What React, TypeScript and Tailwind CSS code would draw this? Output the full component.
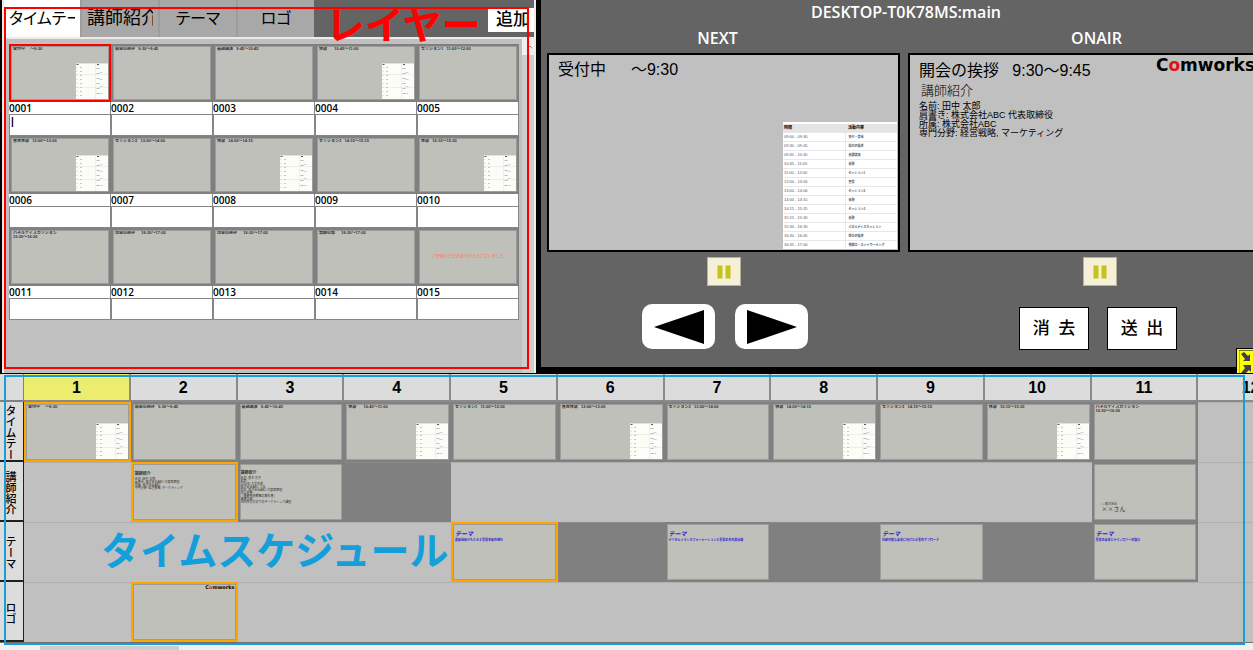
import { useState } from "react";
import type { ReactNode } from "react";
import { ChevronUp } from "lucide-react";

interface Slide {
  id: string;
  title: string;
  second?: string;
  schedule?: boolean;
  closing?: string;
}

const slides: Slide[] = [
  { id: "0001", title: "受付中　 ～9:30", schedule: true },
  { id: "0002", title: "開会の挨拶   9:30～9:45" },
  { id: "0003", title: "基調講演   9:45～10:45" },
  { id: "0004", title: "休憩　   10:45～11:00", schedule: true },
  { id: "0005", title: "セッション1   11:00～12:00" },
  { id: "0006", title: "昼食休憩   12:00～13:00", schedule: true },
  { id: "0007", title: "セッション2   13:00～14:00" },
  { id: "0008", title: "休憩   14:00～14:15", schedule: true },
  { id: "0009", title: "セッション3   14:15～15:15" },
  { id: "0010", title: "休憩   15:15～15:30", schedule: true },
  { id: "0011", title: "パネルディスカッション", second: "15:30～16:30" },
  { id: "0012", title: "閉会の挨拶　  16:30～17:00" },
  { id: "0013", title: "閉会の挨拶　  16:30～17:00" },
  { id: "0014", title: "懇親の部　  16:30～17:00" },
  { id: "0015", title: "", closing: "ご参加いただきありがとうございました" },
];

const agenda = [
  ["09:00 - 09:30", "受付・登録"],
  ["09:30 - 09:45", "開会の挨拶"],
  ["09:45 - 10:45", "基調講演"],
  ["10:45 - 11:00", "休憩"],
  ["11:00 - 12:00", "セッション1"],
  ["12:00 - 13:00", "昼食"],
  ["13:00 - 14:00", "セッション2"],
  ["14:00 - 14:15", "休憩"],
  ["14:15 - 15:15", "セッション3"],
  ["15:15 - 15:30", "休憩"],
  ["15:30 - 16:30", "パネルディスカッション"],
  ["16:30 - 16:45", "閉会の挨拶"],
  ["16:45 - 17:00", "懇親会・ネットワーキング"],
];

const tabs = [
  { name: "タイムテー", size: "text-[16px]" },
  { name: "講師紹介", size: "text-[18px]" },
  { name: "テーマ", size: "text-[16px]" },
  { name: "ロゴ", size: "text-[16px]" },
];

const columns = [1, 2, 3, 4, 5, 6, 7, 8, 9, 10, 11, 12];

const themes: { [key: number]: string } = {
  5: "最新技術がもたらす業界革新の現在",
  7: "デジタルトランスフォーメーションと業界変革の最前線",
  9: "持続可能な未来に向けた企業のアプローチ",
  11: "業界の未来とテクノロジーの融合",
};

// Tiny picture of the agenda sheet used in the corner of a thumbnail
function ScheduleImage() {
  return (
    <svg className="ml-auto mt-auto w-8 h-9 shrink-0" viewBox="0 0 32 36" aria-hidden="true">
      <rect width="32" height="36" fill="#fdfdf8" />
      <path d="M0 0.5H32" stroke="#e2e2dc" />
      <path d="M19.5 0V36M0 11.5H32M0 24.5H32" stroke="#efeee8" />
      <path d="M0.5 1.5h2M21 1.5h2" stroke="#55555a" />
      <path d="M1 4v30" stroke="#e3cbb2" strokeDasharray="1 3" />
      <path d="M5 4v30" stroke="#b4cbe2" strokeWidth="2" strokeDasharray="1 3" />
      <path d="M22 5v29" stroke="#b9b9c6" strokeWidth="3" strokeDasharray="1 4" />
      <path d="M25 9v24" stroke="#c2d4e6" strokeWidth="3" strokeDasharray="1 6" />
    </svg>
  );
}

function Thumb({ frame, children }: { frame: string; children?: ReactNode }) {
  return (
    <div className={`border-2 overflow-hidden ${frame}`}>
      <div className="h-full border border-[#9c9c9a] bg-[#c0c0ba] overflow-hidden flex flex-col whitespace-pre text-[4px] leading-[4px] font-bold text-[#30302e]">
        {children}
      </div>
    </div>
  );
}

function SlideFace({ slide }: { slide: Slide }) {
  return (
    <>
      {slide.title && <p className="px-px">{slide.title}</p>}
      {slide.second && <p className="px-px">{slide.second}</p>}
      {slide.schedule && <ScheduleImage />}
      {slide.closing && (
        <p className="m-auto text-[#ff8078]">{slide.closing}</p>
      )}
    </>
  );
}

function PauseButton({ label }: { label: string }) {
  return (
    <button
      aria-label={label}
      className="mt-[5px] w-[34px] h-[29px] bg-[#f5f0d6] border border-[#b5b39c] flex items-center justify-center"
    >
      <svg width="14" height="14" viewBox="0 0 14 14">
        <rect x="0.5" y="0.5" width="5" height="13" fill="#c4c41a" />
        <rect x="8.5" y="0.5" width="5" height="13" fill="#c4c41a" />
      </svg>
    </button>
  );
}

function Brand({ className }: { className: string }) {
  return (
    <span className={`font-['DejaVu_Sans',sans-serif] font-bold text-black ${className}`}>
      C<span className="text-[#dc1414]">o</span>mworks
    </span>
  );
}

function LayerPanel() {
  const [selected, setSelected] = useState(0);

  return (
    <section className="relative w-[536px] shrink-0 bg-[#c0c0c0] border-l-2 border-black flex flex-col">
      <div className="flex flex-col flex-1 border-x-2 border-[#ebebeb]">
        <div className="flex items-start bg-[#646464] border-b-2 border-[#ebebeb]">
          <div role="tablist" className="flex gap-[2px] bg-[#9c9c9c]">
            {tabs.map((tab, i) => (
              <button
                key={tab.name}
                role="tab"
                aria-selected={i === selected}
                onClick={() => setSelected(i)}
                className={`w-[76px] h-[37px] px-[5px] ${i === selected ? "bg-white" : "bg-[#a8a8a8]"}`}
              >
                <span
                  className={`block overflow-hidden whitespace-nowrap [font-feature-settings:'palt'] ${tab.size}`}
                >
                  {tab.name}
                </span>
              </button>
            ))}
          </div>
          <button className="ml-auto mt-2 w-[46px] h-6 pl-1 bg-white text-[17px] leading-6 font-medium">
            追加
          </button>
        </div>

        <div className="flex flex-1">
          <div className="flex-1 pt-[5px] pl-[5px] pr-[3px] pb-[53px]">
            <div className="grid grid-cols-5 bg-[#858585]">
              {slides.map((slide, i) => (
                <div key={slide.id} className="flex flex-col">
                  <Thumb
                    frame={i === 0 ? "h-[58px] border-[#ff0000]" : "h-[58px] border-[#808080]"}
                  >
                    <SlideFace slide={slide} />
                  </Thumb>
                  <label
                    htmlFor={`memo-${slide.id}`}
                    className="h-3 mr-px bg-white text-[10px] leading-3 font-semibold font-['Open_Sans',sans-serif] text-black"
                  >
                    {slide.id}
                  </label>
                  <input
                    id={`memo-${slide.id}`}
                    defaultValue={i === 0 ? "|" : ""}
                    className="h-5 my-px mx-px min-w-0 px-px pb-2 bg-white text-[10px] font-bold text-black outline-none"
                  />
                </div>
              ))}
            </div>
          </div>
          <div className="w-3 bg-[#cdcdcd]">
            <div className="h-4 bg-[#f0f0f0] flex items-center justify-end">
              <ChevronUp className="w-2 h-2 text-[#606060]" />
            </div>
          </div>
        </div>
      </div>

      <div className="absolute left-[2px] right-[7px] top-[7px] bottom-[4px] border-2 border-[#ff0000] pointer-events-none" />
      <p className="absolute left-[324px] top-[6px] text-[39px] leading-10 font-bold text-[#ff0000] pointer-events-none">
        レイヤー
      </p>
    </section>
  );
}

function NextMonitor() {
  return (
    <div className="w-full h-[199px] border-2 border-black bg-[#c0c0c0] flex flex-col">
      <p className="pl-[9px] pt-[5px] text-[16px] leading-5 whitespace-pre text-black">
        {"受付中　  ～9:30"}
      </p>
      <table className="ml-auto mt-auto mr-px mb-px w-[114px] bg-white text-[4px] leading-[8px] whitespace-nowrap text-[#46586c]">
        <thead>
          <tr className="bg-[#e4e4e4] border-t-2 border-white text-left text-black">
            <th className="p-0 pl-px w-[62px] h-[9px]">時間</th>
            <th className="p-0 pl-[3px]">活動内容</th>
          </tr>
        </thead>
        <tbody>
          {agenda.map(([time, item]) => (
            <tr key={time} className="border-t border-[#e8e8e8]">
              <td className="p-0 pl-px h-[9px] border-r border-[#e8e8e8]">{time}</td>
              <td className="p-0 pl-[3px] text-[3px] font-bold">{item}</td>
            </tr>
          ))}
        </tbody>
      </table>
    </div>
  );
}

function OnairMonitor() {
  return (
    <div className="w-full h-[199px] border-2 border-black bg-[#c0c0c0] pl-[9px] text-black">
      <div className="flex justify-between pr-7">
        <p className="pt-1 text-[16px] leading-6 whitespace-pre">
          {"開会の挨拶   9:30～9:45"}
        </p>
        <Brand className="text-[17px] leading-5" />
      </div>
      <p className="pl-[2px] text-[13px] leading-4 font-light">講師紹介</p>
      <div className="pt-[3px] text-[9px] leading-[9px]">
        <p>名前: 田中 太郎</p>
        <p>肩書き: 株式会社ABC 代表取締役</p>
        <p>所属: 株式会社ABC</p>
        <p>専門分野: 経営戦略, マーケティング</p>
      </div>
    </div>
  );
}

function OutputPanel() {
  return (
    <section className="relative flex-1 min-w-0 overflow-hidden bg-[#646464] border-l-[5px] border-b-[6px] border-black">
      <div className="w-max pl-1.5 text-white">
        <h1 className="h-6 pr-5 text-center text-[16px] leading-6 font-semibold font-['Open_Sans',sans-serif]">
          DESKTOP-T0K78MS:main
        </h1>
        <div className="flex gap-2">
          <div className="w-[353px] flex flex-col items-center">
            <h2 className="h-[29px] pr-3 text-[16px] leading-7 font-semibold font-['Open_Sans',sans-serif]">
              NEXT
            </h2>
            <NextMonitor />
            <PauseButton label="NEXT 一時停止" />
            <div className="mt-[18px] pl-[3px] flex gap-5">
              <button aria-label="前へ" className="w-[73px] h-[45px] rounded-[10px] bg-white flex items-center justify-center">
                <svg width="50" height="34" viewBox="0 0 50 34">
                  <polygon points="0,17 50,0 50,34" fill="#000" />
                </svg>
              </button>
              <button aria-label="次へ" className="w-[73px] h-[45px] rounded-[10px] bg-white flex items-center justify-center">
                <svg width="50" height="34" viewBox="0 0 50 34">
                  <polygon points="50,17 0,0 0,34" fill="#000" />
                </svg>
              </button>
            </div>
          </div>
          <div className="w-[377px] flex flex-col items-center">
            <h2 className="h-[29px] text-[16px] leading-7 font-semibold font-['Open_Sans',sans-serif]">
              ONAIR
            </h2>
            <OnairMonitor />
            <div className="pl-1.5">
              <PauseButton label="ONAIR 一時停止" />
            </div>
            <div className="mt-[21px] pl-[3px] flex gap-[18px] text-[17px] font-medium text-black">
              <button className="w-[70px] h-[43px] bg-white border border-black">消&ensp;去</button>
              <button className="w-[70px] h-[43px] bg-white border border-black">送&ensp;出</button>
            </div>
          </div>
        </div>
      </div>
    </section>
  );
}

function TimelineCell({ row, col }: { row: number; col: number }) {
  const plain = "h-[60px] border-[#808080]";
  const active = "h-[60px] border-[#ffa500]";

  if (row === 0 && col <= 11) {
    return (
      <Thumb frame={col === 1 ? active : plain}>
        <SlideFace slide={slides[col - 1]} />
      </Thumb>
    );
  }
  if (row === 1 && col === 2) {
    return (
      <Thumb frame={active}>
        <p className="px-px pt-[7px]">講師紹介</p>
        <div className="px-px pt-[2px] text-[3px] leading-[3px] font-normal">
          <p>名前: 田中 太郎</p>
          <p>肩書き: 株式会社ABC 代表取締役</p>
          <p>所属: 株式会社ABC</p>
          <p>専門分野: 経営戦略, マーケティング</p>
        </div>
      </Thumb>
    );
  }
  if (row === 1 && col === 3) {
    return (
      <Thumb frame={plain}>
        <p className="pt-[6px]">講師紹介</p>
        <div className="pt-[2px] text-[3px] leading-[3px] font-normal">
          <p>名前: 鈴木 花子</p>
          <p>経歴:</p>
          <p>2010年 大学卒業</p>
          <p>株式会社ABC 入社</p>
          <p>現在: 株式会社ABC 代表取締役</p>
          <p>主な著書:</p>
          <p>「最新技術戦略の教科書」</p>
          <p>講演実績:</p>
          <p>国内外の大学でのマーケティング講座</p>
        </div>
      </Thumb>
    );
  }
  if (row === 1 && col === 11) {
    return (
      <Thumb frame={plain}>
        <div className="mt-auto pl-[7px] pb-[7px] font-normal">
          <p className="text-[3px]">○○株式会社</p>
          <p className="text-[6px] leading-[6px] font-['Noto_Sans_CJK_JP',sans-serif]">××さん</p>
        </div>
      </Thumb>
    );
  }
  if (row === 2 && themes[col]) {
    return (
      <Thumb frame={col === 5 ? active : plain}>
        <div className="px-px pt-[6px] text-[#2a20d0]">
          <p className="text-[6px] leading-[7px] italic">テーマ</p>
          <p className="text-[3px]">{themes[col]}</p>
        </div>
      </Thumb>
    );
  }
  if (row === 3 && col === 2) {
    return (
      <Thumb frame={active}>
        <Brand className="ml-auto text-[5px] leading-[4px]" />
      </Thumb>
    );
  }

  const dark = (row === 1 && col === 4) || (row === 2 && [6, 8, 10].includes(col));
  return (
    <div
      className={`h-[60px] border-t ${dark ? "bg-[#808080] border-[#8a8a8a]" : "border-[#b0b0b0]"}`}
    />
  );
}

function Timeline() {
  return (
    <section className="relative flex-1 flex flex-col bg-[#c0c0c0] overflow-hidden">
      <table className="table-fixed w-[1305px] border-separate border-spacing-0">
        <thead>
          <tr>
            <td className="w-6 h-7 p-0 bg-[#dcdcdc] border-r border-b-2 border-[#808080]" />
            {columns.map((n) => (
              <th
                key={n}
                scope="col"
                className={`h-7 p-0 pt-[2px] border-r-2 border-b-2 border-[#8a8a8a] text-[16px] leading-6 font-bold font-['Liberation_Sans',sans-serif] text-black ${
                  n === 1 ? "bg-[#ecec6e]" : "bg-[#dcdcdc]"
                }`}
              >
                {n}
              </th>
            ))}
          </tr>
        </thead>
        <tbody>
          {tabs.map((tab, row) => (
            <tr key={tab.name}>
              <th scope="row" className="p-0 bg-[#dcdcdc] border-r border-b-2 border-[#202020]">
                <div className="h-[58px] pl-1 pt-[3px] overflow-hidden flex items-center">
                  <span className="[writing-mode:vertical-rl] text-[11px] leading-3 font-medium whitespace-nowrap text-black">
                    {tab.name}
                  </span>
                </div>
              </th>
              {columns.map((col) => (
                <td key={col} className="p-0">
                  <TimelineCell row={row} col={col} />
                </td>
              ))}
            </tr>
          ))}
        </tbody>
      </table>
      <div className="flex-1 min-h-2 border-t border-[#707070] bg-[#f0f0f0] pl-10 pt-[3px] flex">
        <div className="w-[139px] bg-[#cdcdcd]" />
      </div>

      <div className="absolute left-1 right-2 top-px bottom-[5px] border-2 border-[#149fda] pointer-events-none" />
      <p className="absolute left-[101px] top-[158px] text-[39px] leading-10 font-bold text-[#149fda] pointer-events-none">
        タイムスケジュール
      </p>
    </section>
  );
}

export default function App() {
  return (
    <div
      lang="ja"
      className="min-h-screen overflow-hidden bg-black flex flex-col font-['Liberation_Sans','Noto_Sans_CJK_JP',sans-serif]"
    >
      <div className="relative flex border-b border-black">
        <LayerPanel />
        <OutputPanel />
        <button
          aria-label="縮小"
          className="absolute right-0 bottom-0 w-[17px] h-[25px] bg-[#ffff00] border-l border-t border-black flex justify-end items-end"
        >
          <svg width="14" height="23" viewBox="0 0 14 23">
            <path d="M0 23V0.5H14" fill="none" stroke="#77770a" />
            <path d="M2 4L5 2L9 6L11 4V11H4L6 9Z" fill="#40404a" />
            <path d="M4 15H12V22L10 20L7 23H2L6 18Z" fill="#40404a" />
          </svg>
        </button>
      </div>
      <Timeline />
    </div>
  );
}
